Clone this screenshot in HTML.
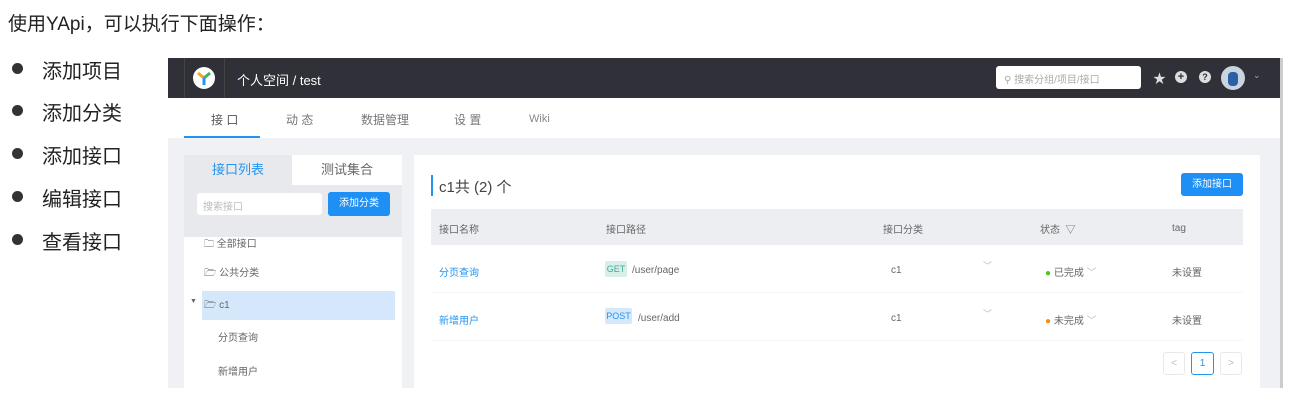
<!DOCTYPE html><html><head><meta charset="utf-8"><style>
*{margin:0;padding:0;box-sizing:border-box}
body{width:1293px;height:409px;background:#fff;font-family:"Liberation Sans","Noto Sans CJK SC",sans-serif;position:relative;overflow:hidden;color:#333}
.a{position:absolute;white-space:nowrap}
.s{font-size:11px;color:#666}
.cn{font-size:20px;color:#222}
.dot{width:11px;height:11px;border-radius:50%;background:#333;position:absolute;left:12px}
</style></head><body>
<div class="a" style="left:8px;top:9px;font-size:19px;color:#222">使用YApi，可以执行下面操作：</div>
<div class="dot" style="top:63px"></div><div class="a cn" style="left:42px;top:55px">添加项目</div>
<div class="dot" style="top:105px"></div><div class="a cn" style="left:42px;top:97px">添加分类</div>
<div class="dot" style="top:148px"></div><div class="a cn" style="left:42px;top:140px">添加接口</div>
<div class="dot" style="top:191px"></div><div class="a cn" style="left:42px;top:183px">编辑接口</div>
<div class="dot" style="top:234px"></div><div class="a cn" style="left:42px;top:226px">查看接口</div>

<div class="a" style="left:168px;top:58px;width:1112px;height:330px;background:#f0f1f5">
 <div class="a" style="left:0;top:0;width:1112px;height:40px;background:#2f3038"></div>
 <div class="a" style="left:16px;top:0;width:1px;height:40px;background:#444"></div>
 <div class="a" style="left:56px;top:0;width:1px;height:40px;background:#444"></div>
 <svg class="a" style="left:25px;top:9px" width="22" height="22" viewBox="0 0 22 22"><circle cx="11" cy="11" r="11" fill="#fff"/><path d="M11 11 L5 6" stroke="#f5a623" stroke-width="3"/><path d="M11 11 L17 6" stroke="#4caf50" stroke-width="3"/><path d="M11 11 V18" stroke="#2395f1" stroke-width="3"/></svg>
 <div class="a" style="left:69px;top:12px;font-size:13px;color:#fff">个人空间 / test</div>
 <div class="a" style="left:828px;top:8px;width:145px;height:23px;background:#fff;border-radius:3px;font-size:10px;color:#aaa;padding:5px 0 0 8px">⚲ 搜索分组/项目/接口</div>
 <div class="a" style="left:985px;top:10px;color:#ddd;font-size:13px">★</div>
 <div class="a" style="left:1007px;top:13px;width:12px;height:12px;border-radius:50%;background:#ddd;font-size:11px;color:#2f3038;text-align:center;line-height:12px;font-weight:bold">+</div>
 <div class="a" style="left:1031px;top:13px;width:12px;height:12px;border-radius:50%;background:#ddd;font-size:9px;color:#2f3038;text-align:center;line-height:12px;font-weight:bold">?</div>
 <div class="a" style="left:1053px;top:8px;width:24px;height:24px;border-radius:50%;background:#c9d4e0"><div style="margin:6px 7px;width:10px;height:14px;background:#2b5fa8;border-radius:4px"></div></div>
 <div class="a" style="left:1085px;top:12px;color:#aaa;font-size:9px">⌄</div>
 <div class="a" style="left:0;top:40px;width:1112px;height:40px;background:#fff"></div>
 <div class="a" style="left:43px;top:53px;font-size:12px;color:#555">接 口</div>
 <div class="a" style="left:118px;top:53px;font-size:12px;color:#777">动 态</div>
 <div class="a" style="left:193px;top:53px;font-size:12px;color:#777">数据管理</div>
 <div class="a" style="left:286px;top:53px;font-size:12px;color:#777">设 置</div>
 <div class="a" style="left:361px;top:55px;font-size:11px;color:#888">Wiki</div>
 <div class="a" style="left:16px;top:78px;width:76px;height:2px;background:#2395f1"></div>
 <div class="a" style="left:16px;top:97px;width:218px;height:233px;background:#fff"></div>
 <div class="a" style="left:16px;top:97px;width:108px;height:30px;background:#e8e9ed;color:#2395f1;font-size:13px;text-align:center;line-height:30px">接口列表</div>
 <div class="a" style="left:124px;top:97px;width:110px;height:30px;color:#666;font-size:13px;text-align:center;line-height:30px">测试集合</div>
 <div class="a" style="left:16px;top:127px;width:218px;height:52px;background:#e8e9ed"></div>
 <div class="a" style="left:29px;top:135px;width:125px;height:22px;background:#fff;border-radius:3px;font-size:10px;color:#bbb;padding:5px 6px">搜索接口</div>
 <div class="a" style="left:160px;top:134px;width:62px;height:24px;background:#1e8ff5;border-radius:3px;font-size:10px;color:#fff;text-align:center;line-height:24px">添加分类</div>
 <div class="a s" style="left:36px;top:177px;font-size:10px">🗀 全部接口</div>
 <div class="a s" style="left:36px;top:206px;font-size:10px">🗁 公共分类</div>
 <div class="a" style="left:34px;top:233px;width:193px;height:29px;background:#d5e7fb"></div>
 <div class="a s" style="left:22px;top:240px;font-size:7px">▼</div>
 <div class="a s" style="left:36px;top:240px;font-size:10px">🗁 c1</div>
 <div class="a s" style="left:50px;top:271px;font-size:10px">分页查询</div>
 <div class="a s" style="left:50px;top:305px;font-size:10px">新增用户</div>
 <div class="a" style="left:246px;top:97px;width:846px;height:233px;background:#fff"></div>
 <div class="a" style="left:263px;top:117px;width:2px;height:21px;background:#2395f1"></div>
 <div class="a" style="left:271px;top:118px;font-size:15px;color:#444">c1共 (2) 个</div>
 <div class="a" style="left:1013px;top:115px;width:62px;height:23px;background:#1e8ff5;border-radius:3px;font-size:10px;color:#fff;text-align:center;line-height:23px">添加接口</div>
 <div class="a" style="left:263px;top:151px;width:812px;height:36px;background:#edeef2"></div>
 <div class="a s" style="left:271px;top:163px;font-size:10px">接口名称</div>
 <div class="a s" style="left:438px;top:163px;font-size:10px">接口路径</div>
 <div class="a s" style="left:715px;top:163px;font-size:10px">接口分类</div>
 <div class="a s" style="left:872px;top:163px;font-size:10px">状态 &nbsp;▽</div>
 <div class="a s" style="left:1004px;top:165px;font-size:10px">tag</div>
 <div class="a" style="left:263px;top:234px;width:812px;height:1px;background:#f5f5f5"></div>
 <div class="a" style="left:263px;top:282px;width:812px;height:1px;background:#f5f5f5"></div>
 <div class="a" style="left:271px;top:206px;font-size:10px;color:#2395f1">分页查询</div>
 <div class="a" style="left:437px;top:203px;width:22px;height:16px;background:#d8eee8;color:#4a9;font-size:9px;text-align:center;line-height:16px;border-radius:2px">GET</div>
 <div class="a s" style="left:464px;top:207px;font-size:10px">/user/page</div>
 <div class="a s" style="left:723px;top:207px;font-size:10px">c1</div>
 <div class="a" style="left:815px;top:201px;font-size:9px;color:#bbb">﹀</div>
 <div class="a s" style="left:877px;top:206px;font-size:10px"><span style="color:#52c41a">●</span> 已完成 <span style="color:#bbb">﹀</span></div>
 <div class="a s" style="left:1004px;top:206px;font-size:10px">未设置</div>
 <div class="a" style="left:271px;top:254px;font-size:10px;color:#2395f1">新增用户</div>
 <div class="a" style="left:437px;top:250px;width:27px;height:16px;background:#d6e9fc;color:#2395f1;font-size:9px;text-align:center;line-height:16px;border-radius:2px">POST</div>
 <div class="a s" style="left:470px;top:255px;font-size:10px">/user/add</div>
 <div class="a s" style="left:723px;top:255px;font-size:10px">c1</div>
 <div class="a" style="left:815px;top:249px;font-size:9px;color:#bbb">﹀</div>
 <div class="a s" style="left:877px;top:254px;font-size:10px"><span style="color:#fa8c16">●</span> 未完成 <span style="color:#bbb">﹀</span></div>
 <div class="a s" style="left:1004px;top:254px;font-size:10px">未设置</div>
 <div class="a" style="left:995px;top:294px;width:22px;height:23px;border:1px solid #e8e8e8;border-radius:3px;color:#bbb;font-size:10px;text-align:center;line-height:21px">&lt;</div>
 <div class="a" style="left:1023px;top:294px;width:23px;height:23px;border:1px solid #2395f1;border-radius:3px;color:#2395f1;font-size:10px;text-align:center;line-height:21px">1</div>
 <div class="a" style="left:1052px;top:294px;width:22px;height:23px;border:1px solid #e8e8e8;border-radius:3px;color:#bbb;font-size:10px;text-align:center;line-height:21px">&gt;</div>
</div>
<div class="a" style="left:1280px;top:58px;width:3px;height:330px;background:#ccc"></div>
</body></html>
